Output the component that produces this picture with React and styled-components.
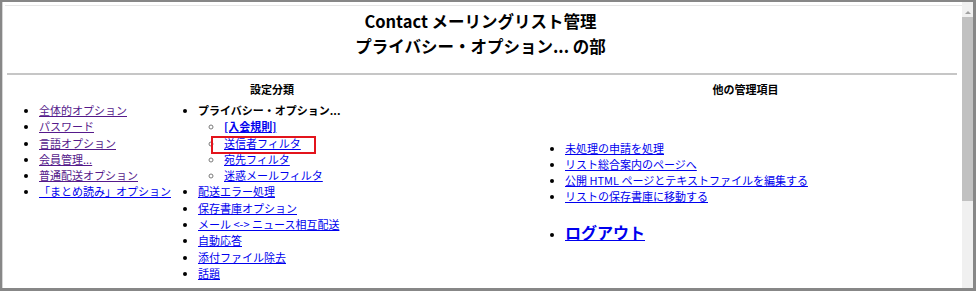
import React from "react";
import styled, { createGlobalStyle } from "styled-components";

const Global = createGlobalStyle`
  html, body { margin: 0; padding: 0; background: #fff; }
  body { font-family: "Noto Sans CJK JP", "Noto Sans", sans-serif; color: #000; }
`;

const Frame = styled.div`
  width: 976px;
  height: 291px;
  box-sizing: border-box;
  border-style: solid;
  border-color: #878787;
  border-width: 2px 3px 3px 2px;
  display: flex;
  background: #fff;
  overflow: hidden;
`;

const Viewport = styled.div`
  flex: 1;
  min-width: 0;
  display: flex;
  flex-direction: column;
  padding-top: 3px;
  border-left: 1px solid #d6d6d6;
`;

const TopLine = styled.div`
  height: 1px;
  background: #e6e6e6;
  margin-left: 2px;
`;

const Header = styled.header`
  text-align: center;
  font-weight: bold;
  font-size: 16.5px;
  line-height: 25px;
  padding-top: 3px;
  margin-left: -4px;
`;

const Rule = styled.div`
  margin: 14px 5px 0 4px;
  height: 2px;
  background: #c6c6c6;
`;

const Table = styled.div`
  display: grid;
  grid-template-columns: 528px 419px;
  row-gap: 5px;
  margin: 6px 0 0 5px;
`;

const Heading = styled.div`
  text-align: center;
  font-weight: bold;
  font-size: 11px;
  line-height: 16px;
`;

const LeftCell = styled.div`
  display: flex;
  align-items: flex-start;
`;

const RightCell = styled.div`
  display: flex;
  flex-direction: column;
  justify-content: center;
`;

const List = styled.ul`
  margin: 0;
  padding-left: ${(p) => p.$indent}px;
  flex: ${(p) => (p.$width ? `0 0 ${p.$width}px` : "0 0 auto")};
  box-sizing: border-box;
  list-style: ${(p) => p.$bullet || "disc"};
  font-size: 11px;
  line-height: 16.3px;
  white-space: nowrap;
  margin-top: ${(p) => p.$top || 0}px;
`;

const SubList = styled(List)`
  font-weight: normal;
  & > li::marker {
    color: #7a7a7a;
    font-size: 10px;
  }
`;

const Item = styled.li`
  position: relative;
  font-weight: ${(p) => (p.$bold ? "bold" : "normal")};
`;

const Link = styled.a`
  color: ${(p) => (p.$visited ? "#551a8b" : "#0000ee")};
  text-decoration: underline;
  text-underline-offset: 1px;
  font-weight: ${(p) => (p.$bold ? "bold" : "inherit")};
  font-size: ${(p) => (p.$big ? "16px" : "inherit")};
  line-height: ${(p) => (p.$big ? "23px" : "inherit")};
`;

const Highlight = styled.span`
  position: absolute;
  left: -13px;
  top: 1px;
  width: 105px;
  height: 18px;
  box-sizing: border-box;
  border: 2px solid #e3141c;
  pointer-events: none;
`;

const Scrollbar = styled.div`
  flex: 0 0 11px;
  background: #f0f0f0;
  display: flex;
  flex-direction: column;
  padding-top: 5px;
`;

const ArrowUp = styled.div`
  height: 10px;
  display: flex;
  align-items: center;
  justify-content: center;
  &::before {
    content: "";
    width: 0;
    height: 0;
    border-left: 3px solid transparent;
    border-right: 3px solid transparent;
    border-bottom: 3px solid #a0a0a0;
  }
`;

const Thumb = styled.div`
  height: 184px;
  background: #c1c1c1;
`;

const leftItems = [
  "全体的オプション",
  "パスワード",
  "言語オプション",
  "会員管理...",
  "普通配送オプション",
];

const privacySub = ["宛先フィルタ", "迷惑メールフィルタ"];

const moreItems = [
  "配送エラー処理",
  "保存書庫オプション",
  "メール <-> ニュース相互配送",
  "自動応答",
  "添付ファイル除去",
  "話題",
];

const otherItems = [
  "未処理の申請を処理",
  "リスト総合案内のページへ",
  "公開 HTML ページとテキストファイルを編集する",
  "リストの保存書庫に移動する",
];

export default function App() {
  return (
    <>
      <Global />
      <Frame>
        <Viewport>
          <TopLine />
          <Header>
            <div>Contact メーリングリスト管理</div>
            <div>プライバシー・オプション... の部</div>
          </Header>
          <Rule />
          <Table>
            <Heading>設定分類</Heading>
            <Heading>他の管理項目</Heading>
            <LeftCell>
              <List $indent={31} $width={182}>
                {leftItems.map((t) => (
                  <Item key={t}>
                    <Link href="#" $visited>
                      {t}
                    </Link>
                  </Item>
                ))}
                <Item>
                  <Link href="#">「まとめ読み」オプション</Link>
                </Item>
              </List>
              <List $indent={8}>
                <Item $bold>
                  プライバシー・オプション...
                  <SubList $indent={26} $bullet="circle">
                    <Item>
                      <Link href="#" $bold>
                        [入会規則]
                      </Link>
                    </Item>
                    <Item>
                      <Link href="#">送信者フィルタ</Link>
                      <Highlight />
                    </Item>
                    {privacySub.map((t) => (
                      <Item key={t}>
                        <Link href="#">{t}</Link>
                      </Item>
                    ))}
                  </SubList>
                </Item>
                {moreItems.map((t) => (
                  <Item key={t}>
                    <Link href="#">{t}</Link>
                  </Item>
                ))}
              </List>
            </LeftCell>
            <RightCell>
              <List $indent={29}>
                {otherItems.map((t) => (
                  <Item key={t}>
                    <Link href="#">{t}</Link>
                  </Item>
                ))}
              </List>
              <List $indent={29} $top={16}>
                <Item>
                  <Link href="#" $big $bold>
                    ログアウト
                  </Link>
                </Item>
              </List>
            </RightCell>
          </Table>
        </Viewport>
        <Scrollbar>
          <ArrowUp />
          <Thumb />
        </Scrollbar>
      </Frame>
    </>
  );
}
